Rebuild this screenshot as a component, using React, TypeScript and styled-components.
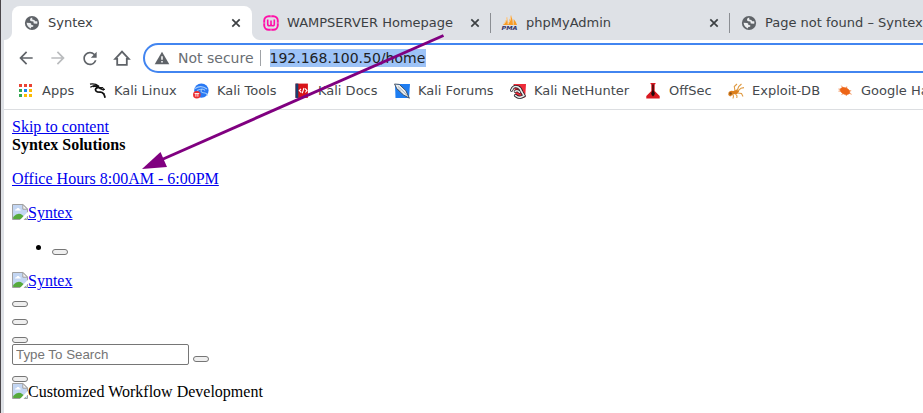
import React from "react";
import styled, { createGlobalStyle } from "styled-components";
import { MdArrowBack, MdArrowForward, MdRefresh } from "react-icons/md";

const GlobalStyle = createGlobalStyle`
  * { box-sizing: border-box; }
  body { margin: 0; background: #fff; overflow: hidden; }
`;

const Screen = styled.div`
  position: relative;
  width: 923px;
  height: 413px;
  overflow: hidden;
  display: flex;
  background: #fff;
`;
const WindowEdge = styled.div`
  flex: none;
  width: 4px;
  border-left: 1px solid #4a464a;
  background: #dee1e6;
`;
const Browser = styled.div`
  flex: none;
  width: 919px;
  overflow: hidden;
`;
const TabStrip = styled.div`
  display: flex;
  height: 40px;
  padding: 6px 0 0 8px;
  background: #dee1e6;
  font: 13px "DejaVu Sans", sans-serif;
  color: #3c4043;
`;
const Tab = styled.div<{ $active?: boolean; $divider?: boolean }>`
  position: relative;
  flex: none;
  display: flex;
  align-items: center;
  width: ${(p) => (p.$active ? 240 : 239)}px;
  margin-right: ${(p) => (p.$active ? -1 : 0)}px;
  height: 34px;
  padding: 0 ${(p) => (p.$active ? 9 : 8)}px 0 12px;
  border-radius: 8px 8px 0 0;
  background: ${(p) => (p.$active ? "#fff" : "transparent")};
  &::before, &::after {
    content: "";
    display: ${(p) => (p.$active ? "block" : "none")};
    position: absolute;
    bottom: 0;
    width: 8px;
    height: 8px;
  }
  &::before { left: -8px; background: radial-gradient(circle at 0 0, #dee1e6 7.5px, #fff 8.5px); }
  &::after {
    right: -8px;
    background: radial-gradient(circle at 100% 0, #dee1e6 7.5px, #fff 8.5px);
    ${(p) => p.$divider && "display: block; width: 1px; height: 20px; bottom: 7px; right: -1px; background: #8b8e93;"}
  }
`;
const TabTitle = styled.span`
  flex: 1;
  margin-left: 8px;
  padding-bottom: 1px;
  overflow: hidden;
  white-space: nowrap;
`;
const Glyph = styled.svg`
  flex: none;
  display: block;
  overflow: visible;
`;
const Toolbar = styled.div`
  display: flex;
  align-items: center;
  height: 36px;
  padding-left: 12px;
  color: #5f6368;
`;
const ToolButton = styled.span<{ $dim?: boolean }>`
  flex: none;
  display: flex;
  justify-content: center;
  width: 20px;
  margin-right: 12px;
  color: ${(p) => (p.$dim ? "#babcbe" : "#5f6368")};
`;
const HomeButton = styled(ToolButton)`
  margin-right: 11px;
`;
const Omnibox = styled.div`
  flex: none;
  display: flex;
  align-items: center;
  width: 820px;
  height: 30px;
  padding-left: 9px;
  border: 2px solid #4285f0;
  border-radius: 15px;
  font: 14px "DejaVu Sans", sans-serif;
`;
const Security = styled.span`
  margin-left: 8px;
  padding-right: 6px;
  white-space: nowrap;
  color: #6a6e73;
  border-right: 1px solid #a0a3a7;
  line-height: 16px;
`;
const Address = styled.span`
  margin-left: 9px;
  padding-right: 1px;
  height: 18px;
  line-height: 18px;
  color: #202124;
  background: #9dc3f7;
`;
const Bookmarks = styled.div`
  display: flex;
  height: 34px;
  padding: 0 0 4px 14px;
  border-bottom: 1px solid #dcdee1;
  font: 13px "DejaVu Sans", sans-serif;
  color: #45494d;
`;
const Bookmark = styled.div<{ $width: number }>`
  flex: none;
  display: flex;
  align-items: center;
  gap: 8px;
  width: ${(p) => p.$width}px;
  white-space: nowrap;
`;
const Page = styled.main`
  padding: 8px;
  font: 16px/18px "Liberation Serif", serif;
  color: #000;
`;
const Line = styled.div<{ $gap?: number; $height?: number }>`
  display: flex;
  align-items: flex-start;
  height: ${(p) => p.$height ?? 18}px;
  margin-bottom: ${(p) => p.$gap ?? 0}px;
  white-space: nowrap;
`;
const Link = styled.a`
  display: flex;
  color: #0000ee;
  text-decoration: underline;
`;
const Bullet = styled.span`
  width: 5px;
  height: 5px;
  margin: 7px 11px 0 24px;
  border-radius: 50%;
  background: #000;
`;
const MiniButton = styled.button<{ $top?: number; $left?: number }>`
  width: 16px;
  height: 6px;
  padding: 0;
  margin: ${(p) => p.$top ?? 11}px 0 0 ${(p) => p.$left ?? 0}px;
  border: 1px solid #767676;
  border-radius: 3px;
  background: #efefef;
`;
const SearchInput = styled.input`
  width: 177px;
  height: 21px;
  padding: 1px 3px;
  border: 1px solid #767676;
  border-radius: 2px;
  font: 13.333px "Liberation Sans", sans-serif;
  &::placeholder { color: #757575; }
`;
const Arrow = styled.svg`
  position: absolute;
  inset: 0;
  pointer-events: none;
`;

const Globe = () => (
  <Glyph width="16" height="16" viewBox="0 0 16 16">
    <circle cx="8" cy="8" r="7.1" fill="#5f6368" />
    <path d="M8.2 2.6Q5.9 3.2 6 4.7 6 6 7.3 6.3L9.4 6.5 9.7 8.4 13.2 8.7Q13.6 7.6 13.2 6.3L11.2 6.3 10.3 5 8.3 4.6zM2.6 7.8L6 8Q7.6 8.3 7.4 9.9L9.3 10.2 9.2 11.8 7.2 12 7 13.4Q3 12 2.6 7.8z" fill="#eceef0" />
  </Glyph>
);
const Close = () => (
  <Glyph width="14" height="14" viewBox="0 0 14 14">
    <path d="M3.3 3.3l7.4 7.4M10.7 3.3l-7.4 7.4" stroke="#3c4043" strokeWidth="1.7" />
  </Glyph>
);
const Wamp = () => (
  <Glyph width="16" height="16" viewBox="0 0 16 16" fill="none" stroke="#ff10a8">
    <rect x="1.2" y="1.2" width="13.6" height="13.6" rx="4.5" strokeWidth="1.9" />
    <path d="M4.7 4.5V9q0 1.8 1.7 1.8T8 9V5.5V9q0 1.8 1.7 1.8T11.3 9V4.5" strokeWidth="1.6" />
    <path d="M0 8h2M14 8h2M8 0v2M8 14v2" stroke="#dee1e6" strokeWidth=".5" />
  </Glyph>
);
const Pma = () => (
  <Glyph width="16" height="16" viewBox="0 0 16 16">
    <path d="M1 10Q4 7 5 2l1 8zM6 10L9 0q2 5 2 10zM11.5 10l.2-6q2.6 3 3.3 6z" fill="#f89c27" />
    <path d="M2 9q3-3 3-7M6 9q3-4 3-8" stroke="#fbd19c" fill="none" />
    <text x="-.5" y="15" fontFamily="DejaVu Sans, sans-serif" fontSize="5.6" fontWeight="bold" fontStyle="italic" fill="#343469" textLength="16" lengthAdjust="spacingAndGlyphs">PMA</text>
  </Glyph>
);
const Home = () => (
  <Glyph width="18" height="18" viewBox="0 0 18 18">
    <path d="M2.2 9.8L9 2.6l6.8 7.2h-2v6H4.2v-6z" fill="none" stroke="#5f6368" strokeWidth="1.8" />
  </Glyph>
);
const Warning = () => (
  <Glyph width="16" height="16" viewBox="0 0 16 16">
    <path d="M8 1.7L15.3 14.3H.7z" fill="#5f6368" />
    <path d="M8 6.2v3.5M8 11v1.5" stroke="#fff" strokeWidth="1.5" />
  </Glyph>
);
const appColors = ["#ea4335", "#ea4335", "#ea4335", "#34a853", "#1a84f0", "#fbbc04", "#34a853", "#fbbc04", "#fbbc04"];
const Apps = () => (
  <Glyph width="16" height="16" viewBox="0 0 16 16">
    {appColors.map((c, i) => (
      <rect key={i} x={1 + (i % 3) * 5} y={1 + Math.floor(i / 3) * 5} width="3" height="3" fill={c} />
    ))}
  </Glyph>
);
const Dragon = () => (
  <Glyph width="16" height="16" viewBox="0 0 16 16" fill="none" stroke="#111">
    <path d="M0 1.2q5-1 9 2M.3 4.3Q5 1.8 9 4" strokeWidth="1.2" />
    <path d="M3 3.3q5-.7 7.5 2.3L14 7M8.5 4.3Q4.2 5.2 6 8q1 1.3 4.5 1.2 3.5.2 4.6 5.6" strokeWidth="1.8" />
    <path d="M10 4.5l3 .1 1.8 2.3M12.5 10l2.3 1" strokeWidth="1" />
  </Glyph>
);
const Tools = () => (
  <Glyph width="16" height="16" viewBox="0 0 16 16">
    <circle cx="8.4" cy="7.6" r="7.2" fill="#2878f4" />
    <path d="M2 5.5Q8 1.5 14 6M4 7.5q6-3 8 0M9 6q-3 3.5 3 4 2.5.3 2 3" stroke="#a5cdfa" strokeWidth="1.1" fill="none" />
    <circle cx="3.8" cy="11.8" r="3.8" fill="#ed2e32" />
    <path d="M1.6 10.5h4.6M2.9 10.7v3M4.9 10.7v3" stroke="#fff" strokeWidth=".9" />
  </Glyph>
);
const Docs = () => (
  <Glyph width="16" height="16" viewBox="0 0 16 16">
    <path d="M1.5 .6h12.4v14.3H1.5z" fill="#d81319" />
    <path d="M1.5 .6h2.8v14.3H1.5z" fill="#173f70" />
    <path d="M7 5.8L5.3 7.5l2 2M11 5.5l2 2-1.7 2M10 5L8.2 10.2" stroke="#fff" strokeWidth="1.1" fill="none" />
  </Glyph>
);
const Forums = () => (
  <Glyph width="16" height="16" viewBox="0 0 16 16">
    <path d="M1 1h15l-1 14H1.5z" fill="#1e7df1" />
    <path d="M.5 1l4.8.4 6.5 6.2 3.6 7.6-5.9-3.3L3 6z" fill="#e8edf1" stroke="#2c3949" strokeWidth=".8" />
    <path d="M4 3.5l6.5 6 3.5 4M4 6l3 2.5" stroke="#7d8890" strokeWidth=".6" fill="none" />
  </Glyph>
);
const Hunter = () => (
  <Glyph width="16" height="16" viewBox="0 0 16 16">
    <path d="M3.5 1H16l-.8 13.5H6z" fill="#ee2b39" />
    <path d="M1.6 7.2Q3.5 2.2 8 4q2.5 1 3.5 4.5l2.5 4.2Q9.5 16 5.5 12.5" fill="none" stroke="#242228" strokeWidth="3.2" strokeLinecap="round" />
    <path d="M5.2 8.4q2.3-1.6 4.3.8" fill="none" stroke="#242228" strokeWidth="2.8" strokeLinecap="round" />
    <path d="M1.6 7.2Q3.5 2.2 8 4q2.5 1 3.5 4.5l2.5 4.2Q9.5 16 5.5 12.5M5.2 8.4q2.3-1.6 4.3.8" fill="none" stroke="#ececec" strokeWidth="1.6" strokeLinecap="round" />
  </Glyph>
);
const OffSec = () => (
  <Glyph width="16" height="16" viewBox="0 0 16 16">
    <path d="M5.5 0h5v1l-.8.5V8l5 5v2.6H1.3V13l5-5V1.5L5.5 1z" fill="#d91820" />
    <path d="M8 1.5v8" stroke="#350909" strokeWidth="1.4" />
    <path d="M8 7q1.8 2 1.8 3.5T8 13.6q-1.8-1.6-1.8-3.1T8 7z" fill="#220909" />
  </Glyph>
);
const Ant = () => (
  <Glyph width="16" height="16" viewBox="0 0 16 16">
    <path d="M.5 9.5Q2 6.8 5.4 8l3.4-1.5 2.4 1.8-2 2.7-3.7.3-3.3 2.2L.3 12z" fill="#dd7f1b" />
    <path d="M7 8l-.7-4.5L9 1M9 8l1.7-4.5L13.5 1M10 8l3-2.8 3-.6M9.5 10l4 .5 1.5 3M7.5 11l1.5 2-.2 2M4.5 11l1 2-.5 2.5" fill="none" stroke="#df9a42" strokeWidth="1.1" />
    <circle cx="2.6" cy="10.5" r="1.2" fill="#86521d" />
  </Glyph>
);
const Bug = () => (
  <Glyph width="16" height="16" viewBox="0 0 16 16" fill="#ed6517" stroke="#ed6517">
    <ellipse cx="8" cy="8" rx="5" ry="3.2" transform="rotate(24 8 8)" strokeWidth=".6" />
    <path d="M5 6.6L1.5 6M4.3 7.8l-2.8.4M6 5L4.4 2.7M9.5 5.3l.3-1.8M12 8l2.2-.3M12 10l2.6 1.3M6.5 10.4l-2 1.2M9.5 11l-.3 2" fill="none" strokeWidth=".7" />
  </Glyph>
);
const BrokenImage = () => (
  <Glyph width="16" height="16" viewBox="0 0 16 16">
    <path d="M.5.5H11l4.5 4.5v10.5H.5z" fill="#c3d6f3" stroke="#a0a0a0" />
    <path d="M3 6.6q0-1.6 1.4-1.4Q5 3.6 6.3 4q1.1.1 1.2 1.3 1.3-.1 1.3 1.3z" fill="#fff" />
    <path d="M1.2 15v-2Q6 7.6 10.5 11.2L14 15z" fill="#56aa3c" />
    <path d="M7.8 16L16 7.8v3.7L11.5 16z" fill="#fff" />
    <path d="M10.8.5v4.7h4.7z" fill="#f4f4f4" stroke="#a0a0a0" strokeLinejoin="round" />
  </Glyph>
);

const bookmarks: { label: string; icon: React.ReactNode; width: number }[] = [
  { label: "Apps", icon: <Apps />, width: 72 },
  { label: "Kali Linux", icon: <Dragon />, width: 103 },
  { label: "Kali Tools", icon: <Tools />, width: 101 },
  { label: "Kali Docs", icon: <Docs />, width: 100 },
  { label: "Kali Forums", icon: <Forums />, width: 116 },
  { label: "Kali NetHunter", icon: <Hunter />, width: 135 },
  { label: "OffSec", icon: <OffSec />, width: 83 },
  { label: "Exploit-DB", icon: <Ant />, width: 109 },
  { label: "Google Hacking DB", icon: <Bug />, width: 160 },
];

export default function App() {
  return (
    <Screen>
      <GlobalStyle />
      <WindowEdge />
      <Browser>
        <TabStrip>
          <Tab $active><Globe /><TabTitle>Syntex</TabTitle><Close /></Tab>
          <Tab $divider><Wamp /><TabTitle>WAMPSERVER Homepage</TabTitle><Close /></Tab>
          <Tab $divider><Pma /><TabTitle>phpMyAdmin</TabTitle><Close /></Tab>
          <Tab><Globe /><TabTitle>Page not found – Syntex</TabTitle></Tab>
        </TabStrip>
        <Toolbar>
          <ToolButton><MdArrowBack size={20} /></ToolButton>
          <ToolButton $dim><MdArrowForward size={20} /></ToolButton>
          <ToolButton><MdRefresh size={21} /></ToolButton>
          <HomeButton><Home /></HomeButton>
          <Omnibox>
            <Warning />
            <Security>Not secure</Security>
            <Address>192.168.100.50/home</Address>
          </Omnibox>
        </Toolbar>
        <Bookmarks>
          {bookmarks.map((b) => (
            <Bookmark key={b.label} $width={b.width}>{b.icon}<span>{b.label}</span></Bookmark>
          ))}
        </Bookmarks>
        <Page>
          <Line><Link>Skip to content</Link></Line>
          <Line $gap={16}><b>Syntex Solutions</b></Line>
          <Line $gap={16}><Link>Office Hours 8:00AM - 6:00PM</Link></Line>
          <Line $gap={16}><Link><BrokenImage /><span>Syntex</span></Link></Line>
          <Line $gap={16}><Bullet /><MiniButton /></Line>
          <Line><Link><BrokenImage /><span>Syntex</span></Link></Line>
          <Line><MiniButton /></Line>
          <Line><MiniButton /></Line>
          <Line><MiniButton /></Line>
          <Line $height={21}>
            <SearchInput placeholder="Type To Search" />
            <MiniButton $top={12} $left={4} />
          </Line>
          <Line><MiniButton /></Line>
          <Line><BrokenImage /><span>Customized Workflow Development</span></Line>
        </Page>
      </Browser>
      <Arrow width="923" height="413" viewBox="0 0 923 413">
        <path d="M443.5 35.5L162 159.5" stroke="#800080" strokeWidth="3" />
        <path d="M142 169L160.5 152L167 167z" fill="#800080" />
      </Arrow>
    </Screen>
  );
}
